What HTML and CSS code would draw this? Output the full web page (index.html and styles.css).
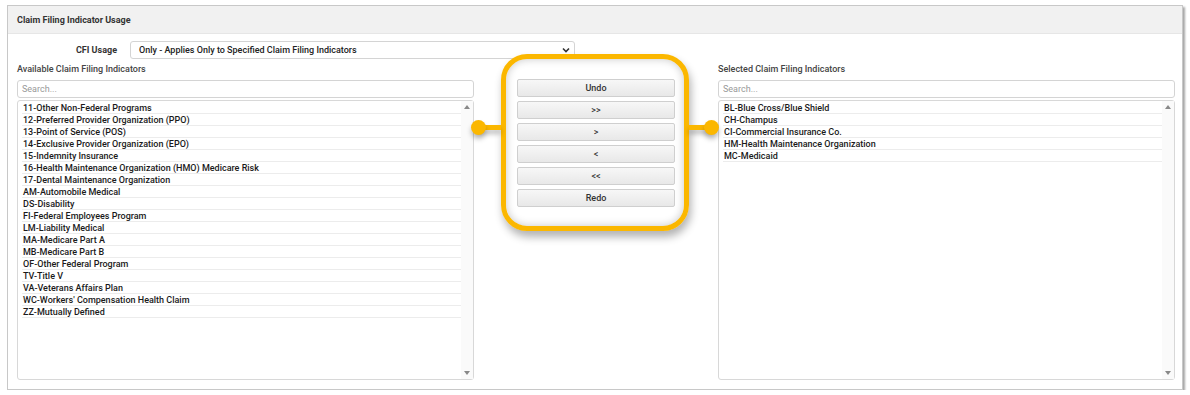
FILE: index.html
```html
<!DOCTYPE html>
<html lang="en">
  <head>
    <meta charset="UTF-8" />
    <title>Claim Filing Indicator Usage</title>
    <link rel="stylesheet" href="styles.css">
  </head>
  <body>
    <div class="panel">
      <div class="panel-heading">Claim Filing Indicator Usage</div>
      <div class="panel-body">
        <div class="usage-row">
          <label class="usage-label" for="cfi-usage">CFI Usage</label>
          <div class="select-box" id="cfi-usage">
            <span>Only - Applies Only to Specified Claim Filing Indicators</span>
            <svg class="caret" width="8" height="6" viewBox="0 0 8 6"><path d="M1 1.5 L4 4.5 L7 1.5" fill="none" stroke="#333" stroke-width="1.6"/></svg>
          </div>
        </div>

        <div class="picker">
          <!-- Available -->
          <div class="side">
            <div class="side-title">Available Claim Filing Indicators</div>
            <div class="search">Search...</div>
            <div class="listbox">
              <ul class="items">
                <li>11-Other Non-Federal Programs</li>
                <li>12-Preferred Provider Organization (PPO)</li>
                <li>13-Point of Service (POS)</li>
                <li>14-Exclusive Provider Organization (EPO)</li>
                <li>15-Indemnity Insurance</li>
                <li>16-Health Maintenance Organization (HMO) Medicare Risk</li>
                <li>17-Dental Maintenance Organization</li>
                <li>AM-Automobile Medical</li>
                <li>DS-Disability</li>
                <li>FI-Federal Employees Program</li>
                <li>LM-Liability Medical</li>
                <li>MA-Medicare Part A</li>
                <li>MB-Medicare Part B</li>
                <li>OF-Other Federal Program</li>
                <li>TV-Title V</li>
                <li>VA-Veterans Affairs Plan</li>
                <li>WC-Workers' Compensation Health Claim</li>
                <li>ZZ-Mutually Defined</li>
              </ul>
              <div class="scroll"><span class="arrow up"></span><span class="arrow down"></span></div>
            </div>
          </div>

          <!-- Buttons -->
          <div class="middle">
            <div class="callout">
              <span class="pin pin-left"></span>
              <span class="pin pin-right"></span>
            </div>
            <div class="buttons">
              <button>Undo</button>
              <button>&gt;&gt;</button>
              <button>&gt;</button>
              <button>&lt;</button>
              <button>&lt;&lt;</button>
              <button>Redo</button>
            </div>
          </div>

          <!-- Selected -->
          <div class="side">
            <div class="side-title">Selected Claim Filing Indicators</div>
            <div class="search">Search...</div>
            <div class="listbox">
              <ul class="items">
                <li>BL-Blue Cross/Blue Shield</li>
                <li>CH-Champus</li>
                <li>CI-Commercial Insurance Co.</li>
                <li>HM-Health Maintenance Organization</li>
                <li>MC-Medicaid</li>
              </ul>
              <div class="scroll"><span class="arrow up"></span><span class="arrow down"></span></div>
            </div>
          </div>
        </div>
      </div>
    </div>
  </body>
</html>
```

FILE: styles.css
```css
body {
  font-family: Roboto, "Liberation Sans", Arial, sans-serif;
  font-size: 9px;
  margin: 0;
  padding: 0;
  background-color: #fff;
  color: #222;
}
.panel {
  margin: 5px 7px 0 7px;
  width: 1174px;
  height: 383px;
  border: 1px solid #c8c8c8;
  box-shadow: 2px 2px 2px rgba(0, 0, 0, 0.35);
  background-color: #fff;
}
.panel-heading {
  height: 27px;
  line-height: 28px;
  padding-left: 9px;
  background-color: #f1f1f1;
  border-bottom: 1px solid #e6e6e6;
  font-weight: bold;
  color: #333;
}
.panel-body {
  padding: 7px 7px 0 9px;
}
.usage-row {
  display: flex;
  align-items: center;
  height: 18px;
}
.usage-label {
  width: 100px;
  padding-right: 13px;
  text-align: right;
  font-weight: bold;
  color: #333;
}
.select-box {
  width: 431px;
  height: 16px;
  border: 1px solid #d4d4d4;
  border-radius: 3px;
  display: flex;
  align-items: center;
  justify-content: space-between;
  padding: 0 4px 0 8px;
  color: #222;
  font-weight: 500;
}
.picker {
  display: grid;
  grid-template-columns: 457px 1fr 457px;
  margin-top: 3px;
}
.side-title {
  height: 14px;
  line-height: 14px;
  color: #444;
  font-weight: 500;
}
.search {
  margin-top: 4px;
  height: 16px;
  line-height: 16px;
  border: 1px solid #d4d4d4;
  border-radius: 3px;
  padding: 0 4px;
  color: #999;
}
.listbox {
  margin-top: 2px;
  height: 278px;
  border: 1px solid #d8d8d8;
  border-radius: 3px;
  display: flex;
}
.items {
  list-style: none;
  margin: 0;
  padding: 1px 0 0 4px;
  flex: 1;
}
.items li {
  height: 11px;
  line-height: 12px;
  border-bottom: 1px solid #ececec;
  padding-left: 1px;
  color: #1a1a1a;
  font-weight: 500;
}
.scroll {
  width: 12px;
  background-color: #fafafa;
  display: flex;
  flex-direction: column;
  justify-content: space-between;
  align-items: center;
  padding: 4px 0;
}
.arrow {
  width: 0;
  height: 0;
  border-left: 3px solid transparent;
  border-right: 3px solid transparent;
}
.arrow.up {
  border-bottom: 4px solid #888;
}
.arrow.down {
  border-top: 4px solid #888;
}
.middle {
  position: relative;
  display: flex;
  justify-content: center;
  padding-top: 17px;
}
.buttons {
  display: flex;
  flex-direction: column;
  gap: 4px;
  width: 158px;
  position: relative;
}
.buttons button {
  height: 18px;
  font-family: inherit;
  font-size: 9px;
  font-weight: 500;
  color: #333;
  border: 1px solid #cfcfcf;
  border-radius: 2px;
  background: linear-gradient(#f7f7f7, #e8e8e8);
  padding: 0;
  cursor: pointer;
}
.callout {
  position: absolute;
  left: 27px;
  top: -8px;
  width: 178px;
  height: 167px;
  border: 5px solid #fbb700;
  border-radius: 26px;
  box-shadow: 2px 6px 8px rgba(0, 0, 0, 0.3), inset 0 0 9px rgba(0, 0, 0, 0.22);
}
.pin {
  position: absolute;
  top: 66px;
  height: 5px;
  width: 24px;
  background-color: #fbb700;
  box-shadow: 0 4px 5px rgba(0, 0, 0, 0.25);
}
.pin::before {
  content: "";
  position: absolute;
  top: -5px;
  width: 15px;
  height: 15px;
  border-radius: 50%;
  background-color: #fbb700;
  box-shadow: 0 4px 5px rgba(0, 0, 0, 0.25);
}
.pin-left {
  left: -29px;
}
.pin-left::before {
  left: -6px;
}
.pin-right {
  right: -29px;
}
.pin-right::before {
  right: -6px;
}
```
